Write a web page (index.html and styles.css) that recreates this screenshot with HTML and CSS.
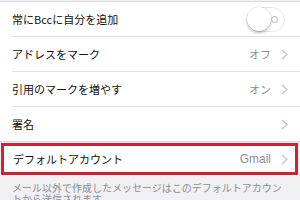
FILE: index.html
```html
<!DOCTYPE html>
<html lang="ja">
<head>
    <meta charset="UTF-8">
    <meta name="viewport" content="width=device-width, initial-scale=1.0">
    <title>メール設定</title>
    <link rel="stylesheet" href="styles.css">
</head>
<body>
    <div class="group">
        <div class="row">
            <span class="label">常にBccに自分を追加</span>
            <span class="toggle"><span class="knob"></span><span class="off-mark"></span></span>
        </div>
        <div class="row">
            <span class="label">アドレスをマーク</span>
            <span class="value">オフ</span>
            <svg class="chevron" viewBox="0 0 7 11"><polyline points="1,1 6,5.5 1,10"/></svg>
        </div>
        <div class="row">
            <span class="label">引用のマークを増やす</span>
            <span class="value">オン</span>
            <svg class="chevron" viewBox="0 0 7 11"><polyline points="1,1 6,5.5 1,10"/></svg>
        </div>
        <div class="row last">
            <span class="label">署名</span>
            <svg class="chevron" viewBox="0 0 7 11"><polyline points="1,1 6,5.5 1,10"/></svg>
        </div>
    </div>

    <div class="highlight">
        <div class="row account">
            <span class="label">デフォルトアカウント</span>
            <span class="value latin">Gmail</span>
            <svg class="chevron" viewBox="0 0 7 11"><polyline points="1,1 6,5.5 1,10"/></svg>
        </div>
    </div>

    <p class="note">メール以外で作成したメッセージはこのデフォルトアカウントから送信されます</p>
</body>
</html>
```

FILE: styles.css
```css
body {
    margin: 0;
    padding-top: 1px;
    background: #efeff4;
    font-family: "Noto Sans CJK JP", "Liberation Sans", sans-serif;
    width: 300px;
    overflow: hidden;
}

.group {
    background: #fff;
    border-top: 1px solid #dcdce0;
    border-bottom: 1px solid #dcdce0;
}

.row {
    display: flex;
    align-items: center;
    height: 34px;
    margin-left: 12px;
    padding-right: 12px;
    border-bottom: 1px solid #e0e0e4;
    font-size: 11px;
    color: #111;
}

.row.last {
    border-bottom: none;
}

.label {
    flex: 1;
}

.value {
    color: #8e8e93;
    margin-right: 10px;
}

.latin {
    font-family: "Liberation Sans", sans-serif;
    font-size: 12px;
}

.chevron {
    width: 7px;
    height: 11px;
    fill: none;
    stroke: #c4c4c9;
    stroke-width: 1.3;
}

.toggle {
    position: relative;
    display: flex;
    align-items: center;
    width: 36px;
    height: 23px;
    margin-right: 3px;
    border: 1.5px solid #e6e6ea;
    border-radius: 13px;
    background: #fff;
}

.knob {
    position: absolute;
    left: -1px;
    top: -1px;
    width: 24px;
    height: 24px;
    border-radius: 50%;
    background: #fff;
    box-shadow: 0 2px 3px rgba(0, 0, 0, 0.25), 0 0 0 0.5px rgba(0, 0, 0, 0.12);
}

.off-mark {
    position: absolute;
    right: 6px;
    top: 8px;
    width: 5px;
    height: 5px;
    border: 1px solid #b5b5ba;
    border-radius: 50%;
}

.highlight {
    margin: 1px 2px 0 1px;
    border: 3px solid #d3202f;
    background: #fff;
}

.highlight .row {
    height: 26px;
    margin-left: 9px;
    padding-right: 7px;
    border-bottom: none;
}

.note {
    margin: 7px 12px 0 12px;
    font-size: 10px;
    line-height: 11px;
    color: #8e8e93;
}
```
